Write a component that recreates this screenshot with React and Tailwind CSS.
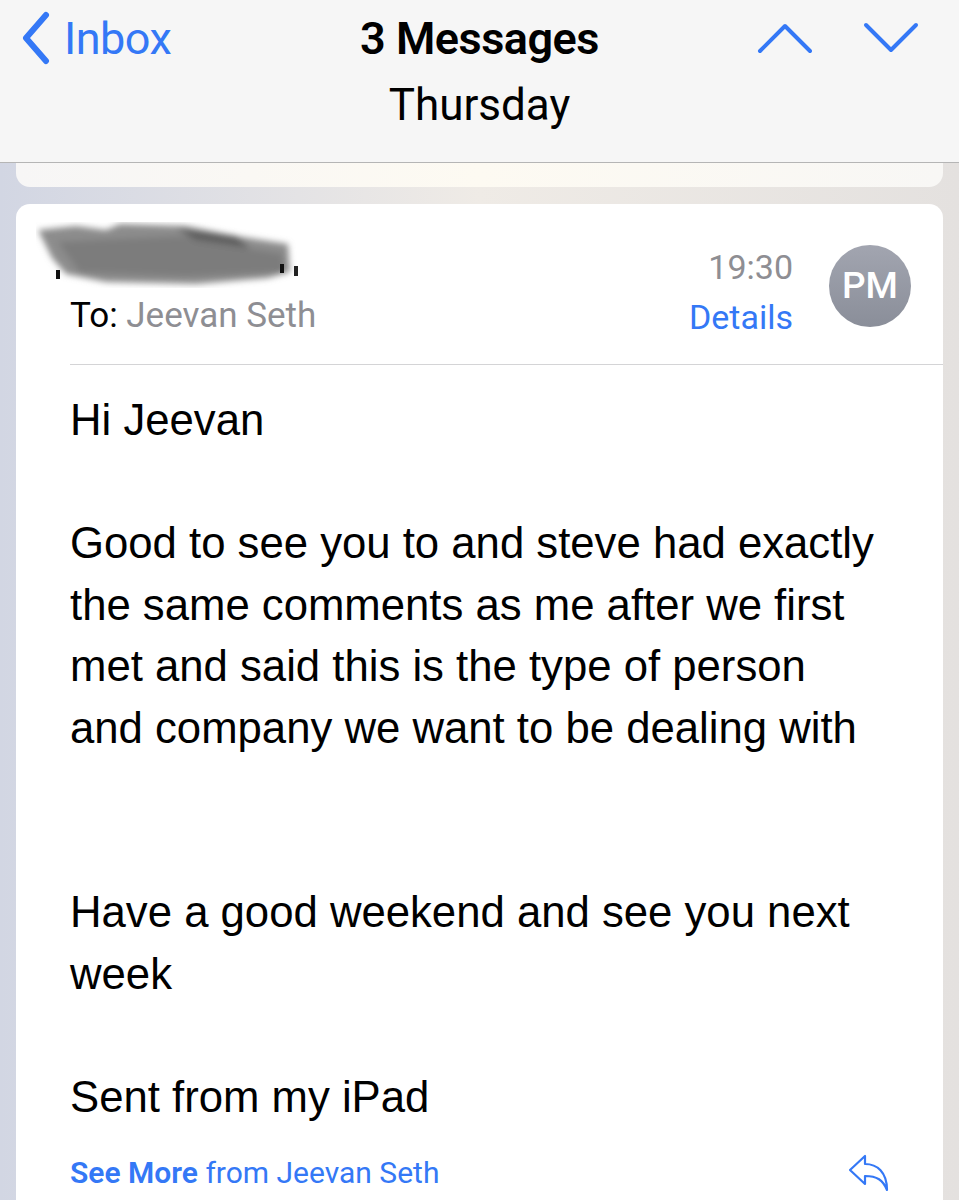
const sf = { fontFamily: 'Roboto, "Open Sans", sans-serif' };

function Redacted() {
  return (
    <svg width="290" height="66" viewBox="0 0 290 66" className="block">
      <defs>
        <filter id="bl" x="-10%" y="-30%" width="120%" height="160%">
          <feGaussianBlur stdDeviation="3" />
        </filter>
      </defs>
      <g filter="url(#bl)">
        <path d="M2 8 L40 4 L70 8 L84 2 L150 4 L200 14 L226 18 L252 22 L254 50 L232 56 L160 62 L70 60 L30 52 L16 36 Z" fill="#8c8c8c" />
        <path d="M22 20 L150 14 L210 26 L246 32 L248 50 L150 54 L44 50 Z" fill="#7c7c7c" />
        <path d="M140 6 L200 14 L214 26 L160 18 Z" fill="#5e5e5e" />
      </g>
      <rect x="20" y="48" width="4" height="9" fill="#111" />
      <rect x="244" y="42" width="4" height="9" fill="#111" />
      <rect x="258" y="44" width="4" height="10" fill="#222" />
    </svg>
  );
}

function ReplyIcon() {
  return (
    <svg width="44" height="40" viewBox="0 0 44 40" fill="none" stroke="#3478f6" strokeWidth="2.2" strokeLinejoin="round" strokeLinecap="round">
      <path d="M3 17 L18 3 L18 11 C30 11 40 19 40 37 C36 27 30 23 18 23 L18 31 Z" />
    </svg>
  );
}

export default function App() {
  return (
    <div
      className="w-[959px] h-[1200px] overflow-hidden flex flex-col bg-linear-to-r from-[#d2d6e3] via-[#efebe6] to-[#e4e1df]"
      style={sf}>
      <header className="h-[163px] shrink-0 bg-[#f6f6f6] border-b border-[#b5b5b5] flex flex-col">
        <div className="h-[76px] flex items-center justify-between px-[20px]">
          <div className="flex items-center gap-[12px] w-[240px] text-[#3478f6]">
            <svg width="32" height="54" viewBox="0 0 32 54" fill="none" stroke="#3478f6" strokeWidth="6" strokeLinecap="round" strokeLinejoin="round">
              <path d="M26 4 L6 27 L26 50" />
            </svg>
            <span className="text-[45px] leading-none tracking-[-0.5px]">Inbox</span>
          </div>
          <h1 className="text-[45px] font-semibold text-black leading-none tracking-[-0.5px]">3 Messages</h1>
          <div className="flex items-center justify-end gap-[50px] w-[240px] pr-[20px]">
            <svg width="56" height="32" viewBox="0 0 56 32" fill="none" stroke="#3478f6" strokeWidth="4" strokeLinecap="round" strokeLinejoin="round">
              <path d="M3 29 L28 4 L53 29" />
            </svg>
            <svg width="56" height="32" viewBox="0 0 56 32" fill="none" stroke="#3478f6" strokeWidth="4" strokeLinecap="round" strokeLinejoin="round">
              <path d="M3 3 L28 28 L53 3" />
            </svg>
          </div>
        </div>
        <div className="text-center text-[44px] leading-none text-black mt-[7px]">Thursday</div>
      </header>

      <div className="px-[16px] flex-1 flex flex-col">
        <div className="h-[24px] rounded-b-[14px] bg-linear-to-r from-[#f7f6f6] via-[#fdfaf2] to-[#f8f7f5]" />
        <div className="mt-[17px] flex-1 bg-white rounded-t-[14px]">
          <div className="flex pt-[18px] pr-[32px]">
            <div className="flex-1">
              <div className="pl-[20px] h-[66px]">
                <Redacted />
              </div>
              <div className="pl-[54px] mt-[10px] text-[35px] leading-none">
                <span className="text-black">To: </span>
                <span className="text-[#8e8e93]">Jeevan Seth</span>
              </div>
            </div>
            <div className="flex flex-col items-end text-[34px] leading-none pt-[28px]">
              <span className="text-[#8e8e93]">19:30</span>
              <span className="text-[#3478f6] mt-[16px]">Details</span>
            </div>
            <div className="ml-[36px] mt-[23px] w-[82px] h-[82px] rounded-full bg-linear-to-b from-[#a2a5b0] to-[#8a8e99] flex items-center justify-center text-white text-[37px] font-medium">
              PM
            </div>
          </div>
          <div className="ml-[54px] mt-[30px] border-t border-[#d4d4d6]" />
          <div
            className="pl-[54px] pr-[65px] pt-[24px] text-[43.7px] leading-[61.5px] text-black"
            style={{ fontFamily: '"Liberation Sans", Arial, sans-serif' }}>
            <p>Hi Jeevan</p>
            <p className="h-[61.5px]" />
            <p>Good to see you to and steve had exactly the same comments as me after we first met and said this is the type of person and company we want to be dealing with</p>
            <p className="h-[61.5px]" />
            <p className="h-[61.5px]" />
            <p>Have a good weekend and see you next week</p>
            <p className="h-[61.5px]" />
            <p>Sent from my iPad</p>
          </div>
          <div className="flex items-center justify-between pl-[54px] pr-[52px] mt-[26px]">
            <span className="text-[30px] leading-none text-[#3478f6]">
              <span className="font-semibold">See More</span> from Jeevan Seth
            </span>
            <ReplyIcon />
          </div>
        </div>
      </div>
    </div>
  );
}
